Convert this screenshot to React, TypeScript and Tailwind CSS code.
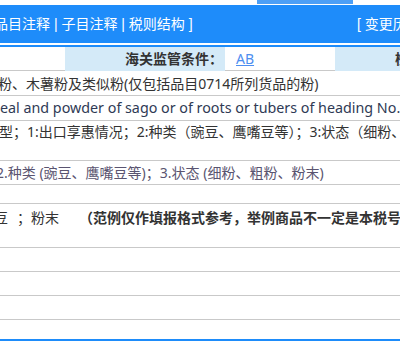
const font = "font-['Noto_Sans','Noto_Sans_CJK_SC',sans-serif]";

function Row({ h, pt, children }: { h: string; pt: string; children?: React.ReactNode }) {
  return (
    <div className={`${h} ${pt} flex items-start overflow-hidden whitespace-nowrap border-b border-[#c9c9c9] leading-[22px]`}>
      {children}
    </div>
  );
}

export default function App() {
  return (
    <div className={`${font} relative h-[341px] w-[400px] overflow-hidden bg-white text-[14px] text-[#333]`}>
      {/* tab strip */}
      <div className="flex h-[4px]">
        <div className="ml-[257px] h-[4px] w-[96px] bg-[#4c9ff6]" />
      </div>

      {/* blue bar */}
      <div className="mt-[1px] flex h-[38px] items-center overflow-hidden whitespace-nowrap bg-[#1e8cfa] font-['Liberation_Sans','Noto_Sans_CJK_SC',sans-serif] text-white">
        <div className="w-[357px] shrink-0">
          <span className="ml-[-6px]">品目注释 | 子目注释 | 税则结构 ]</span>
        </div>
        <span className="shrink-0">[ 变更历史 ]</span>
      </div>
      <div className="h-[2px] bg-white" />
      <div className="h-[2px] bg-[#1e8cfa]" />

      {/* header row */}
      <div className="flex h-[24px] whitespace-nowrap leading-[23px]">
        <div className="w-[65px] shrink-0 border-b border-[#c9c9c9] bg-white" />
        <div className="w-[160px] shrink-0 bg-[#d4eaf8] pr-[2px] text-right font-bold">海关监管条件：</div>
        <div className="w-[110px] shrink-0 border-b border-[#c9c9c9] bg-white pl-[11px]">
          <span className="text-[#4d8ef0] underline">AB</span>
        </div>
        <div className="flex-1 overflow-hidden bg-[#d4eaf8] pl-[60px] font-bold">检验检疫</div>
      </div>

      <Row h="h-[25px]" pt="pt-[2px]">
        <span className="ml-[-2px]">粉、木薯粉及类似粉(仅包括品目0714所列货品的粉)</span>
      </Row>
      <Row h="h-[25px]" pt="pt-[1px]">
        <span className="ml-[0px] text-[14.3px] text-[#2f3a55]">eal and powder of sago or of roots or tubers of heading No. 07.14</span>
      </Row>
      <Row h="h-[40px]" pt="pt-[0px]">
        <span className="ml-[-1px]">型；1:出口享惠情况；2:种类（豌豆、鹰嘴豆等）；3:状态（细粉、粗粉、粉末）</span>
      </Row>
      <Row h="h-[24px]" pt="pt-[1px]">
        <span className="ml-[-4px] text-[#5a5470]">2.种类 (豌豆、鹰嘴豆等)；3.状态 (细粉、粗粉、粉末)</span>
      </Row>
      <Row h="h-[19px]" pt="pt-0" />
      <Row h="h-[44px]" pt="pt-[3px]">
        <span className="ml-[-6px]">豆</span>
        <span className="ml-[9px]">；</span>
        <span>粉末</span>
        <span className="ml-[20px] font-bold">（范例仅作填报格式参考，举例商品不一定是本税号项下商品）</span>
      </Row>
      <Row h="h-[24px]" pt="pt-0" />
      <Row h="h-[24px]" pt="pt-0" />
      <Row h="h-[24px]" pt="pt-0" />
      <div className="h-[19px] bg-white" />
      <div className="h-[2px] bg-[#1e8cfa]" />
    </div>
  );
}
